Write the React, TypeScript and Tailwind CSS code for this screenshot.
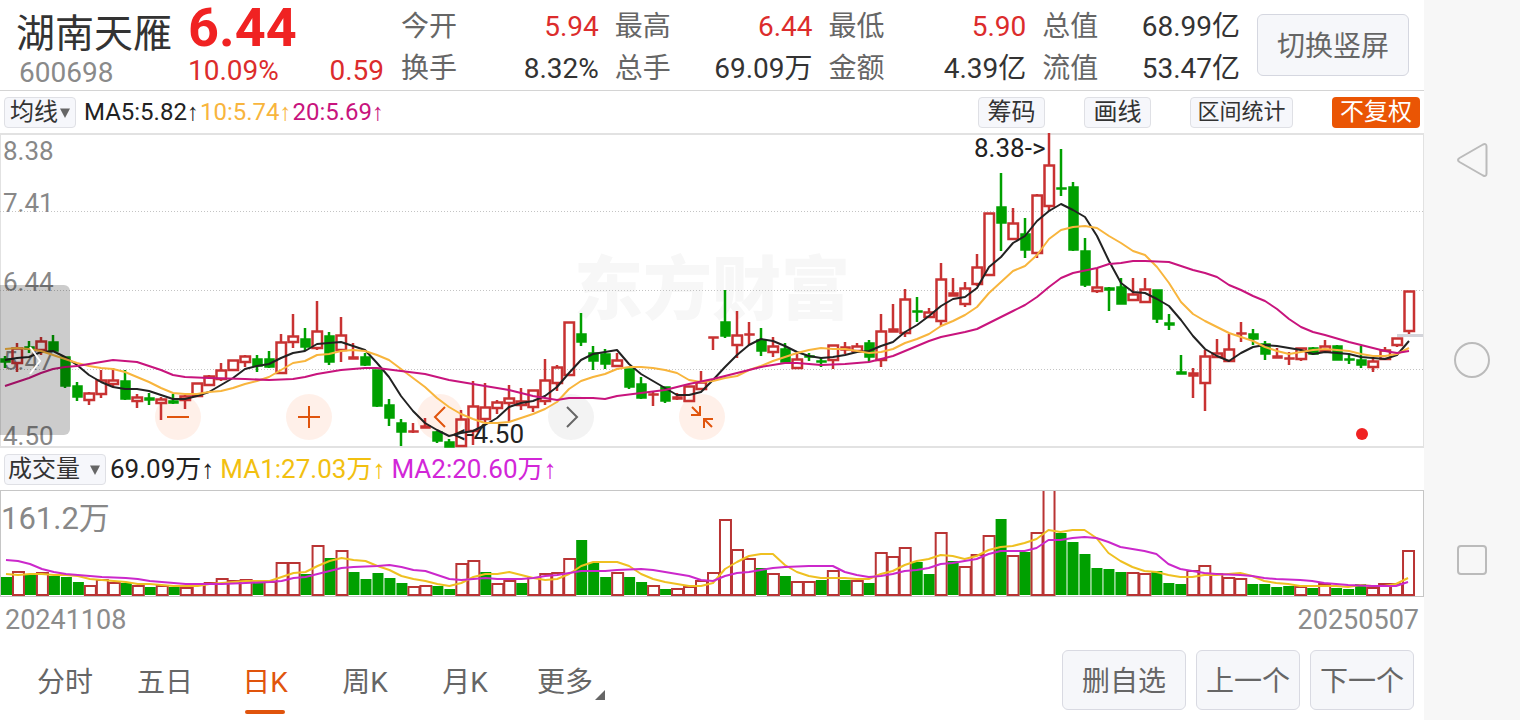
import React from "react";

type Tone = "r" | "g";
type Candle = [Tone, number, number, number, number];

// Each candle: tone, high, body top, body bottom, low (chart y coordinates).
const candles: Candle[] = [
  ["g", 356, 359, 362, 368], ["r", 343, 348, 363, 372], ["g", 341, 347, 349, 353], ["r", 337, 341, 350, 355],
  ["g", 335, 342, 351, 352], ["g", 357, 357, 386, 388], ["g", 382, 386, 397, 401], ["r", 392, 393, 400, 405],
  ["r", 370, 380, 394, 398], ["r", 368, 380, 384, 387], ["g", 370, 381, 399, 400], ["r", 394, 397, 401, 408],
  ["g", 393, 398, 400, 405], ["r", 397, 399, 403, 420], ["g", 394, 401, 403, 404], ["r", 395, 396, 400, 409],
  ["r", 383, 383, 396, 396], ["r", 375, 376, 385, 386], ["r", 363, 370, 379, 381], ["r", 360, 360, 370, 370],
  ["r", 355, 356, 362, 367], ["g", 355, 359, 366, 372], ["g", 351, 359, 367, 368], ["r", 334, 342, 373, 373],
  ["r", 314, 336, 342, 348], ["g", 328, 339, 347, 351], ["r", 301, 331, 348, 350], ["g", 332, 336, 362, 365],
  ["r", 317, 335, 350, 362], ["r", 343, 357, 359, 359], ["g", 353, 357, 365, 366], ["g", 370, 370, 406, 407],
  ["g", 399, 405, 418, 426], ["g", 419, 423, 432, 446], ["r", 423, 431, 432, 433], ["r", 418, 426, 428, 428],
  ["g", 431, 432, 441, 443], ["g", 439, 442, 447, 447], ["r", 410, 419, 446, 446], ["r", 381, 406, 431, 445],
  ["r", 383, 407, 419, 422], ["r", 400, 402, 408, 414], ["r", 385, 398, 403, 422], ["r", 388, 401, 405, 410],
  ["r", 390, 390, 407, 412], ["r", 359, 380, 401, 405], ["r", 365, 367, 383, 391], ["r", 322, 322, 375, 375],
  ["g", 313, 334, 342, 346], ["g", 346, 353, 361, 370], ["g", 349, 354, 364, 369], ["r", 353, 360, 366, 367],
  ["g", 369, 369, 387, 389], ["g", 377, 384, 398, 399], ["r", 391, 394, 395, 406], ["g", 387, 387, 401, 403],
  ["r", 393, 397, 399, 400], ["r", 386, 386, 401, 401], ["r", 371, 382, 389, 389], ["r", 337, 337, 338, 350],
  ["g", 290, 322, 336, 338], ["r", 311, 335, 345, 358], ["r", 322, 334, 335, 345], ["g", 328, 340, 351, 356],
  ["r", 337, 346, 352, 357], ["g", 343, 349, 362, 362], ["r", 354, 359, 368, 368], ["g", 353, 356, 357, 361],
  ["g", 358, 361, 362, 367], ["r", 345, 345, 360, 369], ["r", 342, 347, 350, 354], ["r", 343, 346, 351, 352],
  ["g", 340, 343, 357, 362], ["r", 314, 331, 360, 367], ["r", 304, 329, 332, 332], ["r", 289, 299, 333, 337],
  ["g", 297, 311, 312, 322], ["r", 308, 312, 317, 318], ["r", 263, 279, 321, 326], ["r", 278, 293, 296, 296],
  ["r", 282, 288, 304, 307], ["r", 254, 267, 284, 286], ["r", 213, 213, 275, 275], ["g", 173, 207, 223, 251],
  ["r", 208, 223, 239, 239], ["g", 218, 234, 250, 258], ["r", 194, 195, 253, 258], ["r", 133, 165, 206, 211],
  ["g", 149, 188, 189, 196], ["g", 182, 187, 250, 251], ["g", 238, 251, 285, 287], ["r", 268, 287, 291, 293],
  ["g", 287, 288, 290, 311], ["g", 278, 287, 304, 304], ["r", 278, 294, 300, 300], ["r", 278, 289, 302, 302],
  ["g", 290, 290, 319, 323], ["g", 314, 323, 325, 330], ["g", 355, 372, 374, 374], ["r", 368, 373, 376, 398],
  ["r", 350, 356, 383, 411], ["r", 339, 353, 357, 357], ["r", 334, 349, 361, 361], ["r", 322, 333, 334, 342],
  ["g", 329, 334, 339, 345], ["g", 341, 344, 354, 360], ["r", 348, 356, 358, 358], ["r", 352, 358, 359, 365],
  ["r", 348, 348, 359, 361], ["g", 347, 348, 354, 355], ["r", 340, 346, 351, 352], ["g", 345, 346, 360, 360],
  ["g", 355, 359, 360, 364], ["g", 346, 360, 365, 368], ["r", 359, 361, 367, 372], ["r", 347, 350, 359, 360],
  ["r", 338, 338, 345, 347], ["r", 291, 291, 331, 334],
];

// Top of each volume bar, from the oldest session to the newest.
const volumes =
  "g577 r572 g575 r573 g576 g577 g582 r586 r580 r583 g583 r586 g587 r586 g587 r588 r584 r583 r579 r581 r580 g582 r582 r563 r563 g574 r546 g558 r551 g572 g579 g573 g578 g583 r587 r586 g586 g589 r564 r561 g572 r584 r581 g583 r578 r574 r573 r559 g540 g563 g577 r573 g577 g582 r586 g589 r589 r587 r581 r573 r520 r550 r559 g568 r574 g576 r582 r582 g580 r571 g580 r581 g583 r553 r557 r548 g562 g574 r533 g561 r567 r555 r536 g519 r556 g552 r533 r480 g533 g542 g554 g568 g569 g572 r573 r574 g571 g583 g584 r571 r566 r574 r578 r579 g584 g584 g587 g586 r587 g588 r584 g588 g589 g584 r588 r584 r584 r551".split(" ");

const ma5 = [
  360, 358, 357, 352, 351, 357, 365, 375, 382, 387, 389, 389, 391, 395, 399, 399, 396, 392, 385, 378, 369, 366, 364,
  358, 353, 351, 344, 343, 342, 346, 350, 363, 377, 396, 411, 423, 430, 436, 433, 431, 425, 418, 407, 403, 401, 396,
  387, 373, 360, 354, 352, 350, 364, 374, 381, 388, 395, 395, 392, 380, 367, 355, 345, 339, 341, 346, 352, 356, 358,
  357, 355, 352, 351, 346, 342, 332, 325, 316, 306, 299, 297, 288, 267, 257, 243, 236, 221, 211, 204, 210, 217, 236,
  261, 283, 292, 293, 299, 306, 320, 336, 349, 356, 361, 353, 347, 345, 346, 348, 350, 354, 352, 353, 354, 357, 358,
  359, 355, 341,
];
const ma10 = [
  349, 348, 349, 351, 355, 359, 363, 366, 368, 369, 372, 377, 382, 388, 393, 394, 394, 392, 391, 388, 384, 381, 377,
  370, 363, 361, 355, 354, 351, 350, 351, 355, 360, 369, 378, 387, 398, 407, 414, 419, 423, 423, 422, 418, 414, 409,
  402, 389, 381, 377, 374, 369, 367, 367, 368, 370, 373, 380, 382, 381, 378, 376, 370, 366, 361, 357, 353, 350, 348,
  349, 349, 351, 353, 352, 349, 343, 339, 334, 326, 321, 315, 307, 293, 282, 271, 266, 255, 239, 230, 227, 226, 228,
  236, 243, 251, 255, 267, 283, 302, 314, 321, 327, 333, 337, 341, 347, 351, 354, 352, 350, 349, 350, 351, 354, 356,
  356, 354, 348,
];
const volMa1 = [
  574, 575, 574, 574, 575, 575, 576, 579, 580, 581, 582, 584, 584, 585, 586, 586, 586, 584, 583, 582, 581, 581, 581,
  577, 573, 572, 566, 561, 558, 560, 561, 566, 570, 576, 579, 581, 584, 586, 583, 577, 574, 574, 572, 575, 578, 580,
  579, 574, 566, 562, 562, 562, 566, 574, 579, 582, 584, 586, 586, 583, 569, 562, 556, 554, 554, 565, 572, 576, 578,
  578, 578, 579, 579, 574, 571, 565, 561, 559, 555, 556, 559, 556, 550, 547, 546, 543, 539, 530, 532, 530, 530, 538,
  553, 561, 567, 571, 572, 575, 577, 577, 575, 575, 574, 573, 576, 581, 583, 584, 586, 586, 586, 586, 587, 585, 586,
  586, 584, 578,
];
const ma20 =
  "5,386 17,382 29,378 41,373 53,369 65,367 77,366 89,364 101,362 113,360 125,361 137,362 149,366 161,370 173,375 185,377 209,378 245,379 269,380 293,379 305,377 317,374 341,370 365,368 377,368 401,371 425,374 449,380 473,384 497,388 509,390 521,393 533,396 545,398 557,400 569,398 593,398 605,399 617,396 641,393 665,390 689,384 713,379 737,373 761,367 785,363 797,363 821,365 845,364 869,362 881,359 893,356 905,351 917,346 929,341 941,337 965,332 977,329 989,323 1013,311 1025,305 1037,297 1049,287 1061,278 1073,273 1097,268 1109,264 1121,263 1133,261 1145,261 1169,262 1181,266 1193,270 1205,273 1217,277 1229,285 1241,290 1253,296 1265,301 1277,309 1289,319 1301,327 1313,332 1325,335 1349,342 1373,348 1385,351 1397,353 1409,351";
const volMa2 =
  "5,560 17,561 29,564 41,569 53,572 65,574 77,575 89,576 101,577 125,578 137,579 149,581 161,582 173,583 185,584 221,584 245,583 269,582 281,581 293,578 305,577 317,574 329,571 341,568 353,567 377,566 389,565 401,567 413,570 425,571 437,575 449,579 461,580 473,579 485,578 497,579 521,579 533,578 545,576 557,575 569,573 581,571 605,571 617,570 641,569 653,570 665,572 677,574 689,576 701,580 713,581 725,576 737,573 749,572 761,570 773,568 785,567 809,566 833,566 845,572 857,575 869,577 881,576 893,574 905,571 917,570 929,568 941,564 953,563 965,561 977,559 989,554 1001,551 1025,551 1037,548 1049,540 1061,540 1073,538 1085,537 1097,538 1109,542 1121,547 1133,549 1145,551 1157,554 1169,564 1181,569 1193,571 1205,573 1217,574 1241,575 1253,576 1265,578 1277,579 1301,580 1313,581 1325,583 1337,584 1349,585 1373,586 1397,586 1409,582";

const xAt = (i: number) => 5 + 12 * i;
const toPoints = (ys: number[]) => ys.map((y, i) => `${xAt(i)},${y}`).join(" ");

const RED = "#c83232";
const GREEN = "#00a000";

function CandleMark({ candle, x }: { candle: Candle; x: number }) {
  const [tone, high, top, bottom, low] = candle;
  const color = tone === "r" ? RED : GREEN;
  const hollow = tone === "r" && bottom - top > 3;
  return (
    <g stroke={color} strokeWidth={2.5}>
      {high < top && <line x1={x} x2={x} y1={high} y2={top} />}
      {low > bottom && <line x1={x} x2={x} y1={bottom} y2={low} />}
      {hollow ? (
        <rect x={x - 4.5} y={top + 0.5} width={9.5} height={bottom - top - 0.5} fill="none" />
      ) : (
        <rect x={x - 4} y={top} width={9} height={Math.max(bottom - top, 0)} fill={color} strokeWidth={1.5} />
      )}
    </g>
  );
}

function PriceChart() {
  return (
    <svg viewBox="0 133 1424 315" preserveAspectRatio="none" className="relative block h-[315px] w-full" role="img" aria-label="日K">
      <g stroke="#c4c4c4" strokeWidth={1} strokeDasharray="1 2">
        <line x1={0} x2={1423} y1={211.5} y2={211.5} />
        <line x1={0} x2={1423} y1={290.5} y2={290.5} />
        <line x1={0} x2={1423} y1={369.5} y2={369.5} />
      </g>
      <line x1={1397} x2={1423} y1={335.5} y2={335.5} stroke="#d3d4da" strokeWidth={3} />
      {candles.map((c, i) => (
        <CandleMark key={i} candle={c} x={xAt(i)} />
      ))}
      <g fill="none" strokeWidth={2} strokeLinejoin="round">
        <polyline points={toPoints(ma5)} stroke="#222222" />
        <polyline points={toPoints(ma10)} stroke="#f8b53d" />
        <polyline points={ma20} stroke="#c8147d" />
      </g>
      <g fill="#222222" fontSize={26} className="font-['Roboto',sans-serif]">
        <text x={974} y={157}>8.38-&gt;</text>
        <text x={453} y={443}>&lt;-4.50</text>
      </g>
      <circle cx={1362} cy={434} r={6} fill="#f02222" />
    </svg>
  );
}

function VolumeChart() {
  return (
    <svg viewBox="0 491 1424 105" preserveAspectRatio="none" className="relative block h-[105px] w-full" role="img" aria-label="成交量">
      {volumes.map((v, i) => {
        const top = Number(v.slice(1));
        const x = xAt(i);
        return v[0] === "r" ? (
          <rect key={i} x={x - 5} y={top} width={11} height={595 - top} fill="#ffffff" stroke="#b93434" strokeWidth={2} />
        ) : (
          <rect key={i} x={x - 5} y={top} width={11} height={595 - top} fill={GREEN} />
        );
      })}
      <g fill="none" strokeWidth={2} strokeLinejoin="round">
        <polyline points={toPoints(volMa1)} stroke="#efc021" />
        <polyline points={volMa2} stroke="#cb28cb" />
      </g>
    </svg>
  );
}

const quotes = [
  { label: "今开", value: "5.94", up: true },
  { label: "最高", value: "6.44", up: true },
  { label: "最低", value: "5.90", up: true },
  { label: "总值", value: "68.99亿", up: false },
  { label: "换手", value: "8.32%", up: false },
  { label: "总手", value: "69.09万", up: false },
  { label: "金额", value: "4.39亿", up: false },
  { label: "流值", value: "53.47亿", up: false },
];

function Header() {
  return (
    <header className="flex h-[91px] items-start border-b border-[#d4d4d4] pl-4 pr-[15px]">
      <div className="w-[172px] shrink-0">
        <h1 className="mt-3 text-[39px] leading-[45px] text-[#333]">湖南天雁</h1>
        <p className="pl-[3px] text-[28px] leading-8 text-[#8a8a8a]">600698</p>
      </div>
      <div className="w-[196px] shrink-0">
        <p className="text-[54px] font-bold leading-14 text-[#f02222]">6.44</p>
        <p className="flex justify-between text-[28px] leading-[30px] text-[#dc2c2c]">
          <span>10.09%</span>
          <span>0.59</span>
        </p>
      </div>
      <dl className="ml-[17px] mt-1.5 grid flex-1 grid-cols-4 gap-x-4 text-[28px] leading-[42px]">
        {quotes.map((q) => (
          <div key={q.label} className="flex justify-between whitespace-nowrap">
            <dt className="text-[#666]">{q.label}</dt>
            <dd className={q.up ? "text-[#dc2c2c]" : "text-[#333]"}>{q.value}</dd>
          </div>
        ))}
      </dl>
      <button className="ml-[17px] mt-3.5 h-[62px] w-[152px] shrink-0 rounded-md border border-[#d5d7e0] bg-[#f6f7fa] pt-1 text-[28px] text-[#666]">
        切换竖屏
      </button>
    </header>
  );
}

const chip = "h-[31px] rounded border border-[#dfe0e5] bg-[#f6f7fb] leading-7 text-[#333]";

function PickerArrow() {
  return (
    <svg viewBox="0 0 10 10" className="pointer-events-none absolute right-1.5 top-[11px] size-2.5" aria-hidden="true">
      <path d="M0 0.5H10L5 10Z" fill="#666666" />
    </svg>
  );
}

function RoundButton({ label, muted, children }: { label: string; muted?: boolean; children: React.ReactNode }) {
  return (
    <button
      aria-label={label}
      className={`grid size-[46px] place-items-center rounded-full ${muted ? "bg-[#333333]/6 text-[#666]" : "bg-[#ff6a2b]/10 text-[#e0540c]"}`}
    >
      <svg viewBox="0 0 46 46" className="size-[46px]" fill="none" stroke="currentColor" strokeWidth={2}>
        {children}
      </svg>
    </button>
  );
}

const tabs = ["分时", "五日", "日K", "周K", "月K", "更多"];
const actions = [
  { label: "删自选", className: "w-[124px]" },
  { label: "上一个", className: "w-[104px]" },
  { label: "下一个", className: "w-[104px]" },
];

export default function App() {
  return (
    <div className="flex min-h-screen bg-white font-['Roboto','Liberation_Sans','Noto_Sans_CJK_SC',sans-serif]">
      <main className="min-w-0 flex-1">
        <Header />

        <div className="flex h-[42px] items-center pl-1 pr-1 text-[24px]">
          <div className="relative flex">
            <select aria-label="均线" className={`${chip} w-[72px] appearance-none pl-[5px] text-[24px]`}>
              <option>均线</option>
            </select>
            <PickerArrow />
          </div>
          <p className="ml-2 flex gap-px whitespace-nowrap">
            <span className="text-[#222]">MA5:5.82↑</span>
            <span className="text-[#f8b53d]">10:5.74↑</span>
            <span className="text-[#c8147d]">20:5.69↑</span>
          </p>
          <div className="ml-auto flex gap-[39px]">
            <button className={`${chip} w-[67px] text-[24px]`}>筹码</button>
            <button className={`${chip} w-[67px] text-[24px]`}>画线</button>
            <button className={`${chip} w-[103px] text-[22px]`}>区间统计</button>
            <button className="h-[31px] w-[88px] rounded bg-[#ea5504] text-[24px] leading-7 text-white">不复权</button>
          </div>
        </div>

        <section className="relative h-[315px] border-b-2 border-[#e2e2e2]">
          <div className="absolute inset-0 border-x border-t-2 border-[#e2e2e2]" />
          <p className="absolute left-[574px] top-[124px] text-[69px] font-black leading-[68px] text-[#f7f7f7]">东方财富</p>
          <div className="absolute left-[3px] top-0 text-[26px] leading-8 text-[#888]">
            <span className="absolute top-0.5">8.38</span>
            <span className="absolute top-[54px]">7.41</span>
            <span className="absolute top-[133px]">6.44</span>
            <span className="absolute top-[212px]">5.47</span>
            <span className="absolute top-[287px]">4.50</span>
          </div>
          <div className="absolute left-[155px] top-[261px] flex gap-[85px]">
            <RoundButton label="缩小">
              <path d="M12 23H34" />
            </RoundButton>
            <RoundButton label="放大">
              <path d="M12 23H34M23 12V34" />
            </RoundButton>
            <RoundButton label="左移">
              <path d="M28 13L18 23L28 33" />
            </RoundButton>
            <RoundButton label="右移" muted>
              <path d="M19 13L29 23L19 33" />
            </RoundButton>
            <RoundButton label="收起">
              <path d="M13 13L20 20M12 21H21V12M33 33L26 26M25 34V25H34" />
            </RoundButton>
          </div>
          <PriceChart />
          <button
            aria-label="展开侧栏"
            className="absolute left-0 top-[152px] grid h-[150px] w-[70px] place-items-center rounded-r-md bg-black/20"
          >
            <svg viewBox="0 0 70 150" className="h-[150px] w-[70px]" fill="none" stroke="#ffffff" strokeWidth={2}>
              <path d="M30 62L40 76L30 89" />
            </svg>
          </button>
        </section>

        <div className="flex h-[42px] items-center pl-1">
          <div className="relative flex">
            <select aria-label="成交量" className={`${chip} w-[102px] appearance-none pl-[3px] text-[24px]`}>
              <option>成交量</option>
            </select>
            <PickerArrow />
          </div>
          <p className="ml-1 flex gap-1.5 whitespace-nowrap text-[26px]">
            <span className="text-[#222]">69.09万↑</span>
            <span className="text-[#f2c010]">MA1:27.03万↑</span>
            <span className="text-[#d226d8]">MA2:20.60万↑</span>
          </p>
        </div>

        <section className="relative border border-[#c6c6c6]">
          <p className="absolute left-0 top-2 text-[31px] leading-10 text-[#888]">161.2万</p>
          <VolumeChart />
        </section>

        <div className="flex justify-between px-[5px] pt-[7px] text-[27px] leading-8 text-[#8c8c8c]">
          <time>20241108</time>
          <time>20250507</time>
        </div>

        <footer className="mt-3.5 flex items-start justify-between pl-[15px] pr-2.5 text-[28px]">
          <nav className="flex">
            {tabs.map((tab) => (
              <a
                key={tab}
                href="#"
                aria-current={tab === "日K" ? "page" : undefined}
                className={`relative flex h-16 w-[100px] justify-center leading-[66px] ${tab === "日K" ? "text-[#e0540c]" : "text-[#666]"}`}
              >
                {tab}
                {tab === "日K" && <span className="absolute bottom-0 h-1 w-10 rounded-full bg-[#e0540c]" />}
                {tab === "更多" && (
                  <svg viewBox="0 0 10 10" className="absolute bottom-3.5 right-2.5 size-2.5" aria-hidden="true">
                    <path d="M10 0V10H0Z" fill="#666666" />
                  </svg>
                )}
              </a>
            ))}
          </nav>
          <div className="flex gap-2.5">
            {actions.map((a) => (
              <button
                key={a.label}
                className={`h-[60px] rounded-md border border-[#d9dae2] bg-[#f6f7fa] pt-1 text-[#666] ${a.className}`}
              >
                {a.label}
              </button>
            ))}
          </div>
        </footer>
      </main>

      <nav aria-label="系统导航" className="flex w-24 shrink-0 flex-col items-center justify-center gap-40 bg-[#f7f7f7]">
        <button aria-label="返回" className="grid size-10 place-items-center">
          <svg viewBox="0 0 40 40" className="size-10" fill="none" stroke="#bbbbbb" strokeWidth={2} strokeLinejoin="round">
            <path d="M31 4.500Q34.500 3 34.500 6.500V33.500Q34.500 37 31 35.500L7.500 22Q4.500 20 7.500 18Z" />
          </svg>
        </button>
        <button aria-label="主页" className="grid size-10 place-items-center">
          <svg viewBox="0 0 40 40" className="size-10" fill="none" stroke="#bbbbbb" strokeWidth={2}>
            <circle cx={20} cy={20} r={17} />
          </svg>
        </button>
        <button aria-label="最近任务" className="grid size-10 place-items-center">
          <svg viewBox="0 0 40 40" className="size-10" fill="none" stroke="#bbbbbb" strokeWidth={2}>
            <rect x={6} y={6} width={28} height={28} rx={3} />
          </svg>
        </button>
      </nav>
    </div>
  );
}
